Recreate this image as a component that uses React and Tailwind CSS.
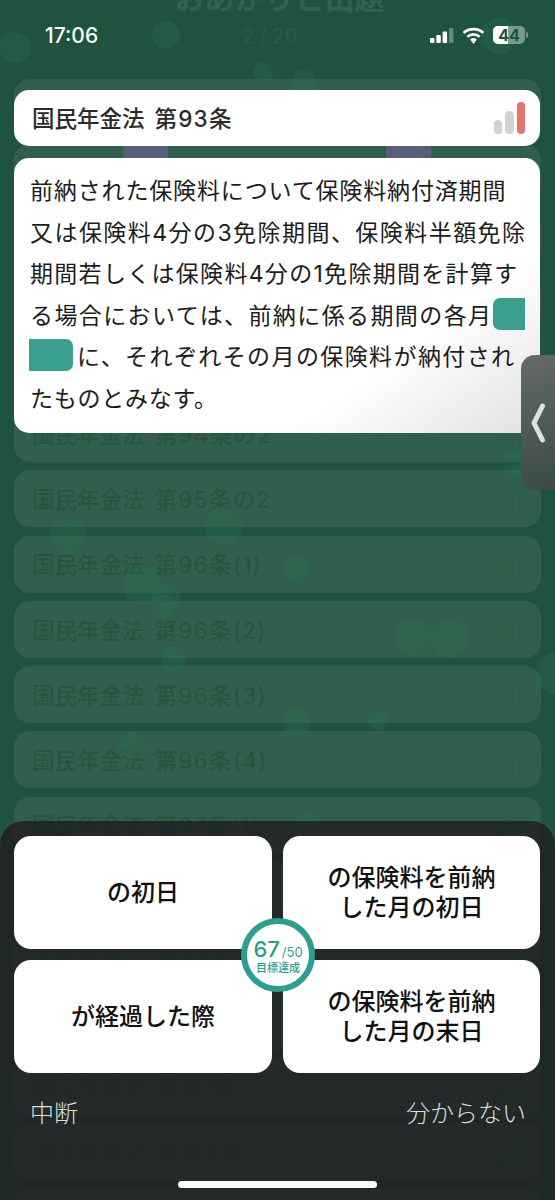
const font = { fontFamily: 'Inter, "Noto Sans CJK JP", "Noto Sans", sans-serif' };

const rows = [
    '第93条',
    '第93条の2',
    '第94条',
    '第94条',
    '第94条',
    '第94条の2',
    '第95条の2',
    '第96条(1)',
    '第96条(2)',
    '第96条(3)',
    '第96条(4)',
    '第97条(1)',
    '第97条(2)',
    '第99条',
    '第101条(1)',
    '第101条(3)',
    '第102条(1)',
    '第102条(2)',
];

// 背景の泡 [x, y, size]
const bubbles = [
    [-1, 32, 31], [152, 21, 28], [253, 62, 20], [292, 70, 23], [481, 18, 36],
    [50, 518, 36], [204, 507, 38], [283, 555, 28], [124, 567, 38], [152, 583, 28],
    [503, 450, 28], [395, 618, 38], [430, 618, 39], [161, 647, 25], [536, 652, 42],
    [283, 708, 27], [368, 710, 20], [119, 732, 26], [294, 813, 22], [152, 595, 24],
];

function Bars({ color = 'bg-[#d2d2d2]', last = 'bg-[#e87272]' }) {
    return (
        <div className="flex items-end gap-[3px]">
            <div className={`w-[8px] h-[14px] rounded-full ${color}`} />
            <div className={`w-[9px] h-[23px] rounded-full ${color}`} />
            <div className={`w-[8px] h-[32px] rounded-full ${last}`} />
        </div>
    );
}

function Title({ label, className }) {
    return (
        <span className={`pt-[2px] text-[22.5px] font-medium ${className}`}>
            国民年金法
            <span className="ml-[10px] tracking-[1.2px]">{label}</span>
        </span>
    );
}

function Row({ label }) {
    return (
        <div className="h-[57px] shrink-0 rounded-[16px] bg-[#325f4d] pl-[18px] pr-[15px] flex items-center justify-between">
            <Title label={label} className="text-[#27553f]" />
            <Bars color="bg-[#2e5d4a]" last="bg-[#2e5d4a]" />
        </div>
    );
}

function Answer({ children }) {
    return (
        <div className="h-[113px] rounded-[17px] bg-white flex items-center justify-center text-center text-[24px] leading-[30px] font-medium text-[#111]">
            <span>{children}</span>
        </div>
    );
}

export default function App() {
    return (
        <div className="relative w-[555px] h-[1200px] overflow-hidden bg-[#20533f]" style={font}>
            {/* 後ろの一覧 */}
            <div className="pt-[78.5px] px-[14px] flex flex-col gap-[8.3px]">
                {rows.map((label, i) => (
                    <Row key={i} label={label} />
                ))}
            </div>

            {bubbles.map(([x, y, s], i) => (
                <div
                    key={i}
                    className="absolute rounded-full bg-[#2a7256]/30"
                    style={{ left: x, top: y, width: s, height: s }}
                />
            ))}

            <div className="absolute left-0 right-0 -top-[24px] text-center text-[30px] font-bold text-[#2f6450] pl-[4px]">おあかりと出題</div>
            <div className="absolute left-0 right-0 top-[21px] pr-[16px] text-center text-[20px] font-light text-[#2b5e4a]">2 / 20</div>
            <div className="absolute left-[123px] top-[146px] w-[45px] h-[12px] bg-[#555f7a]" />
            <div className="absolute left-[386px] top-[146px] w-[45px] h-[12px] bg-[#555f7a]" />

            {/* ステータスバー */}
            <div className="absolute left-[45px] top-[20px] text-[21px] leading-[32px] font-medium text-white">17:06</div>
            <div className="absolute left-[430px] top-[26px] h-[18px] flex items-center">
                <svg width="24" height="15" viewBox="0 0 24 15">
                    <rect x="0" y="10" width="4.500" height="5" rx="1" fill="#fff" />
                    <rect x="6.300" y="7" width="4.500" height="8" rx="1" fill="#fff" />
                    <rect x="12.600" y="3.500" width="4.500" height="11.500" rx="1" fill="#fff" />
                    <rect x="19" y="0" width="4.500" height="15" rx="1" fill="#fff" fillOpacity="0.3" />
                </svg>
                <svg width="23" height="17" viewBox="0 0 24 18" fill="none" stroke="#fff" strokeWidth="2.800" className="ml-[8px]">
                    <path d="M1.500 6.200C7.300 .9 16.700 .9 22.500 6.200" />
                    <path d="M5.500 10.300c3.700-3.300 9.300-3.300 13 0" />
                    <path d="M9.300 14.200c1.600-1.300 3.800-1.300 5.400 0" />
                    <path d="M12 18l-2.400-3h4.800z" fill="#fff" stroke="none" />
                </svg>
                <div className="relative ml-[8px] w-[32px] h-[18px] rounded-[5px] bg-white/40 overflow-hidden flex items-center justify-center">
                    <div className="absolute left-0 top-0 bottom-0 w-[15px] bg-white" />
                    <span className="relative text-[16px] font-bold leading-none text-[#20533f]">44</span>
                </div>
                <div className="ml-[1px] w-[2px] h-[6px] rounded-r-full bg-white/40" />
            </div>

            {/* 問題 */}
            <div className="absolute left-[14px] top-[90px] w-[526px] h-[56px] rounded-[15px] bg-white pl-[18px] pr-[15px] flex items-center justify-between">
                <Title label="第93条" className="text-[#2b2b2b]" />
                <Bars />
            </div>
            <div className="absolute left-[14px] top-[158px] w-[526px] h-[275px] rounded-[15px] bg-[linear-gradient(145deg,#fff_72%,#e0e0e0_100%)] pl-[16px] pt-[13px] text-[23px] leading-[41.6px] text-[#1c1c1c] whitespace-nowrap">
                <div className="tracking-[0.85px]">前納された保険料について保険料納付済期間</div>
                <div className="tracking-[1.45px]">又は保険料4分の3免除期間、保険料半額免除</div>
                <div className="tracking-[1.3px]">期間若しくは保険料4分の1免除期間を計算す</div>
                <div className="flex items-center tracking-[1.4px]">
                    る場合においては、前納に係る期間の各月
                    <span className="ml-[1px] mb-[6px] w-[32px] h-[32px] rounded-l-[7px] bg-[#3b9f90]" />
                </div>
                <div className="flex items-center tracking-[1.4px]">
                    <span className="-ml-[1px] mr-[4px] mb-[6px] w-[44px] h-[32px] rounded-r-[7px] bg-[#3b9f90]" />
                    に、それぞれその月の保険料が納付され
                </div>
                <div className="tracking-[0.75px]">たものとみなす。</div>
            </div>

            {/* サイドのつまみ */}
            <div className="absolute right-0 top-[355px] w-[34px] h-[135px] rounded-l-[14px] bg-[linear-gradient(160deg,#666b69,#3a4a44)] flex items-center justify-center">
                <svg width="16" height="40" viewBox="0 0 16 40" fill="none" stroke="#d5e6e1" strokeWidth="5" strokeLinecap="round" strokeLinejoin="round">
                    <path d="M12.500 3 L4 20 L12.500 37" />
                </svg>
            </div>

            {/* 回答パネル */}
            <div className="absolute left-0 right-0 top-[821px] bottom-0 rounded-t-[24px] bg-[#212223]/[0.86] px-[14px] pt-[15px]">
                <div className="grid grid-cols-[258px_257px] gap-x-[11px] gap-y-[11px]">
                    <Answer>の初日</Answer>
                    <Answer>の保険料を前納<br />した月の初日</Answer>
                    <Answer>が経過した際</Answer>
                    <Answer>の保険料を前納<br />した月の末日</Answer>
                </div>
                <div className="mt-[25px] pl-[16px] pr-[15px] flex items-center justify-between text-[24px] leading-[32px] font-light text-[#dddddd]">
                    <span>中断</span>
                    <span>分からない</span>
                </div>
                <div className="absolute left-[178px] top-[360px] w-[199px] h-[7px] rounded-full bg-white" />
            </div>

            {/* スコア */}
            <div className="absolute left-[241px] top-[918px] w-[74px] h-[74px] rounded-full border-[6px] border-[#2f9e8f] bg-white flex flex-col items-center justify-center text-[#2f9e8f]">
                <div className="flex items-baseline leading-none">
                    <span className="text-[22px] font-medium">67</span>
                    <span className="ml-[2px] text-[13px]">/50</span>
                </div>
                <div className="mt-[2px] -mb-[2px] text-[11px] leading-[13px] font-medium">目標達成</div>
            </div>
        </div>
    );
}
